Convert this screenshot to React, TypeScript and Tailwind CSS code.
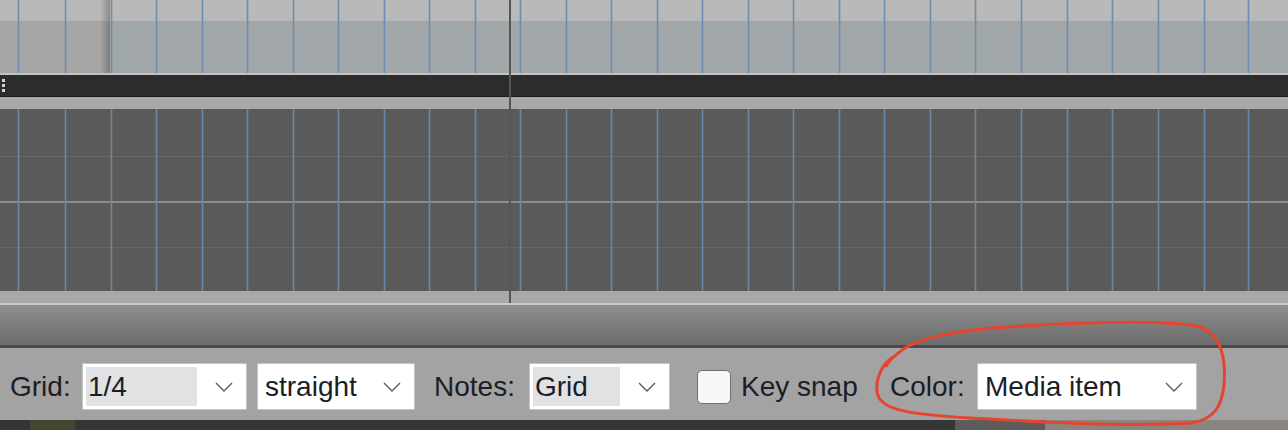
import React from "react";

const gridX = [
  18, 65, 111, 156, 202, 247, 293, 338, 384, 429, 475, 520, 566, 611, 657, 702, 748, 793, 839, 884,
  930, 975, 1021, 1067, 1112, 1158, 1204, 1248,
];

function GridLines({ color, height }: { color: string; height: number }) {
  return (
    <svg className="pointer-events-none absolute left-0 top-0" width={1288} height={height}>
      {gridX.map((x) => (
        <line key={x} x1={x + 0.5} y1={0} x2={x + 0.5} y2={height} stroke={color} strokeWidth={1.6} />
      ))}
    </svg>
  );
}

function Chevron() {
  return (
    <svg width="18" height="10" viewBox="0 0 18 10" className="shrink-0">
      <polyline points="1,1 9,9 17,1" fill="none" stroke="#5c5c5c" strokeWidth="1.4" />
    </svg>
  );
}

interface DropdownProps {
  value: string;
  width: string;
  highlight?: string;
}

function Dropdown({ value, width, highlight }: DropdownProps) {
  return (
    <div
      className={`flex h-[47px] shrink-0 items-center justify-between border border-[#c4c4c4] bg-white pl-[3px] pr-[13px] ${width}`}
    >
      {highlight ? (
        <span className={`flex h-[39px] items-center bg-[#e1e2e4] pl-[2px] ${highlight}`}>{value}</span>
      ) : (
        <span className="pl-[4px]">{value}</span>
      )}
      <Chevron />
    </div>
  );
}

export default function App() {
  return (
    <div className="flex h-[430px] w-[1288px] flex-col overflow-hidden bg-[#a3a3a3] font-['Liberation_Sans',Arial,sans-serif]">
      <div className="relative flex-1 flex-col">
        {/* top lane */}
        <div className="relative flex h-[73px]">
          <div className="relative flex w-[110px] flex-col">
            <div className="h-[21px] bg-[#b8b8b8]" />
            <div className="h-[52px] bg-[#a6a6a6]" />
            <div className="absolute right-0 top-0 h-full w-[10px] bg-gradient-to-r from-transparent to-black/25" />
          </div>
          <div className="flex flex-1 flex-col">
            <div className="h-[21px] bg-[#b9b9b9]" />
            <div className="h-[52px] bg-[#a2a7aa]" />
          </div>
          <GridLines color="#6b8eb2" height={73} />
        </div>
        <div className="h-[2px] bg-[#c3c3c3]" />
        <div className="flex h-[21px] flex-col justify-center gap-[2px] bg-[#2c2c2c] pl-[2px]">
          <div className="h-[3px] w-[3px] bg-[#d2d2d2]" />
          <div className="h-[3px] w-[3px] bg-[#d2d2d2]" />
          <div className="h-[3px] w-[3px] bg-[#d2d2d2]" />
        </div>
        <div className="h-[1px] bg-[#1a1a1a]" />
        <div className="h-[12px] bg-[#a9a9a9]" />
        {/* piano roll */}
        <div className="relative flex h-[182px] flex-col bg-[#5a5a5a]">
          <div className="h-[47px]" />
          <div className="h-[1px] bg-[#676767]" />
          <div className="h-[44px]" />
          <div className="h-[2px] bg-[#8c8c8c]" />
          <div className="h-[44px]" />
          <div className="h-[1px] bg-[#676767]" />
          <GridLines color="#6489ae" height={182} />
        </div>
        <div className="h-[12px] bg-[#a9a9a9]" />
        <div className="absolute left-[509px] top-0 h-[303px] w-[2px] bg-[#555555]" />
      </div>
      <div className="h-[2px] bg-[#c9c9c9]" />
      <div className="h-[40px] bg-gradient-to-b from-[#8f8f8f] to-[#6b6b6b]" />
      <div className="h-[3px] bg-[#4a4a4a]" />
      {/* toolbar */}
      <div className="flex h-[72px] items-center pt-[5px] text-[28px] leading-none text-[#1d1d26]">
        <span className="w-[82px] shrink-0 pl-[10px]">Grid:</span>
        <Dropdown value="1/4" width="w-[165px]" highlight="w-[111px]" />
        <div className="w-[10px] shrink-0" />
        <Dropdown value="straight" width="w-[158px]" />
        <span className="w-[114px] shrink-0 pl-[19px]">Notes:</span>
        <Dropdown value="Grid" width="w-[141px]" highlight="w-[87px]" />
        <div className="ml-[27px] h-[34px] w-[34px] shrink-0 rounded-[5px] border border-[#6f6f6f] bg-[#f7f7f7]" />
        <span className="w-[159px] shrink-0 pl-[10px]">Key snap</span>
        <span className="w-[87px] shrink-0">Color:</span>
        <Dropdown value="Media item" width="w-[220px]" />
      </div>
      <div className="flex h-[10px]">
        <div className="w-[30px] bg-[#343434]" />
        <div className="w-[45px] bg-[#44472f]" />
        <div className="w-[880px] bg-[#363636]" />
        <div className="w-[90px] bg-[#5c5c5c]" />
        <div className="flex-1 bg-[#8b8580]" />
      </div>
      <svg className="pointer-events-none absolute left-0 top-0" width={1288} height={430}>
        <path
          d="M 893 357 C 880 365, 873 385, 879 398 C 888 412, 920 415, 970 418 C 1040 422, 1120 427, 1190 423 C 1215 420, 1222 405, 1224 385 C 1226 360, 1222 335, 1200 327 C 1170 320, 1100 322, 1040 325 C 980 328, 930 333, 905 348 C 896 354, 888 362, 886 366"
          fill="none"
          stroke="#e8432c"
          strokeWidth="3"
          strokeLinecap="round"
        />
      </svg>
    </div>
  );
}
